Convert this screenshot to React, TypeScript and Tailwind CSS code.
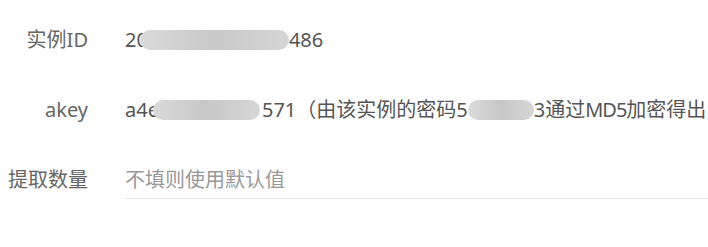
import type { ReactNode } from 'react'

const font = { fontFamily: '"Noto Sans", "Noto Sans CJK SC", sans-serif' }

function Masked({ w, className = '' }: { w: number; className?: string }) {
  return (
    <span
      className={`inline-block h-[20px] shrink-0 rounded-full bg-gradient-to-r from-[#dadada] via-[#c8c8c8] to-[#d6d6d6] ${className}`}
      style={{ width: w }}
    />
  )
}

function Row({ label, children }: { label: string; children: ReactNode }) {
  return (
    <div className="flex h-[70px] items-center">
      <div className="w-[88px] shrink-0 text-right text-[#666]">{label}</div>
      <div className="ml-[37px] flex min-w-0 flex-1 items-center whitespace-nowrap text-[#555] [&>span]:shrink-0">
        {children}
      </div>
    </div>
  )
}

export default function App() {
  return (
    <div
      className="h-[247px] w-[708px] overflow-hidden bg-white pt-[5px] text-[20px] leading-[28px]"
      style={font}
    >
      <Row label="实例ID">
        <span>20</span>
        <Masked w={149} className="-ml-[8px]" />
        <span>486</span>
      </Row>
      <Row label="akey">
        <span>a4e</span>
        <Masked w={107} className="-ml-[6px]" />
        <span className="ml-[2px]">571（由该实例的密码5</span>
        <Masked w={66} />
        <span>
          3通过<span className="tracking-[-1px]">MD5</span>加密得出，请妥善保管）
        </span>
      </Row>
      <Row label="提取数量">
        <input
          className="h-[38px] w-full border-b border-[#e5e5e5] bg-transparent text-[#555] outline-none placeholder:text-[#999]"
          placeholder="不填则使用默认值"
          style={font}
        />
      </Row>
    </div>
  )
}
